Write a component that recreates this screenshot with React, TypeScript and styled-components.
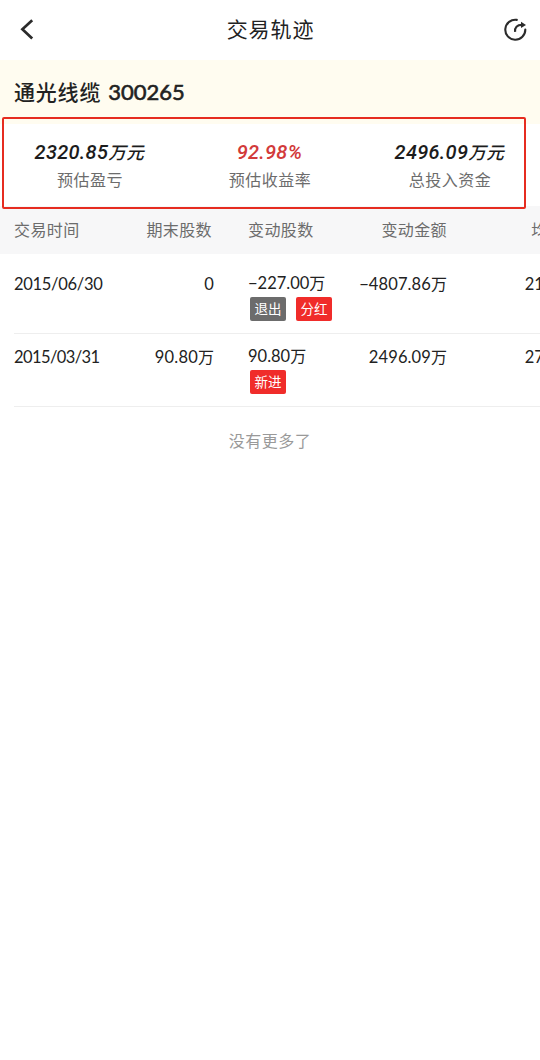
import React from 'react';
import styled, { createGlobalStyle } from 'styled-components';

const GlobalStyle = createGlobalStyle`
  * { box-sizing: border-box; }
  body {
    margin: 0;
    background: #fff;
    color: #222;
    font-family: Lato, "Noto Sans CJK SC", sans-serif;
    overflow-x: hidden;
  }
`;

const Page = styled.main`
  position: relative;
  width: 540px;
  min-height: 1060px;
  background: #fff;
  overflow: hidden;
`;

const Header = styled.header`
  display: flex;
  align-items: center;
  justify-content: space-between;
  height: 60px;
  padding: 0 12px 0 16px;
`;

const Title = styled.h1`
  margin: 0;
  padding-right: 3px;
  padding-bottom: 2px;
  font-size: 21px;
  line-height: 56px;
  letter-spacing: 0.9px;
  font-weight: 400;
`;

const IconButton = styled.button`
  display: flex;
  width: 24px;
  height: 24px;
  padding: 0;
  border: 0;
  background: none;
`;

const StockBar = styled.section`
  height: 64px;
  padding-left: 14px;
  background: #fffcf0;
  font-size: 21px;
  font-weight: 500;
  line-height: 64px;
  letter-spacing: 0.8px;
  white-space: pre;
`;

const StockCode = styled.span`
  margin-left: 7px;
  font-family: Lato, sans-serif;
  font-size: 22px;
  font-weight: 400;
  letter-spacing: 0;
  -webkit-text-stroke: 0.6px #222;
`;

const Stats = styled.section`
  display: grid;
  grid-template-columns: repeat(3, 180px);
  height: 82px;
  padding-top: 16px;
  text-align: center;
`;

const StatValue = styled.div<{ $red?: boolean }>`
  height: 26px;
  padding-right: 1px;
  line-height: 25px;
  font-family: Roboto, "Noto Sans CJK SC", sans-serif;
  font-size: 20px;
  font-style: italic;
  font-weight: 500;
  letter-spacing: 0.3px;
  color: ${(p) => (p.$red ? '#d23a3a' : '#1c1c1c')};
`;

const StatUnit = styled.span`
  font-size: 17.5px;
  letter-spacing: 0.6px;
`;

const StatLabel = styled.div`
  height: 28px;
  line-height: 28px;
  font-size: 16px;
  letter-spacing: 0.5px;
  color: #6c6c6c;
`;

const Highlight = styled.div`
  position: absolute;
  left: 2px;
  top: 117px;
  width: 524px;
  height: 92px;
  border: 2px solid #e62c20;
  border-radius: 2px;
`;

const columns = '100px 100px 34px 99px 100px 119px';

const TableHead = styled.div`
  display: grid;
  grid-template-columns: ${columns};
  height: 48px;
  padding-left: 14px;
  background: #f7f7f8;
  color: #6c6c6c;
  font-size: 16px;
  line-height: 48px;
  letter-spacing: 0.4px;
`;

const HeadCell = styled.div<{ $right?: boolean; $col: number; $inset?: number }>`
  grid-column: ${(p) => p.$col};
  padding-right: ${(p) => p.$inset || 0}px;
  text-align: ${(p) => (p.$right ? 'right' : 'left')};
  white-space: nowrap;
`;

const Row = styled.div<{ $height: number; $top: number }>`
  display: grid;
  grid-template-columns: ${columns};
  width: 552px;
  height: ${(p) => p.$height}px;
  margin-left: 14px;
  padding-top: ${(p) => p.$top}px;
  border-bottom: 1px solid #eee;
`;

const Cell = styled.div<{ $right?: boolean; $col: number }>`
  grid-column: ${(p) => p.$col};
  font-size: 16px;
  line-height: 24px;
  text-align: ${(p) => (p.$right ? 'right' : 'left')};
  white-space: nowrap;
`;

const Num = styled.span<{ $gap?: number }>`
  font-size: 16.5px;
  letter-spacing: ${(p) => p.$gap || 0}px;
`;

const Change = styled.div`
  margin-top: -1px;
`;

const Tags = styled.div`
  display: flex;
  gap: 10px;
  margin: 2px 0 0 2px;
`;

const Tag = styled.span<{ $grey?: boolean }>`
  width: 36px;
  height: 24px;
  border-radius: 2px;
  background: ${(p) => (p.$grey ? '#6c6c6c' : '#f02c2a')};
  color: #fff;
  font-size: 13.5px;
  line-height: 24px;
  text-align: center;
`;

const Footer = styled.footer`
  padding-top: 20px;
  text-align: center;
  color: #999;
  font-size: 16px;
  line-height: 28px;
  letter-spacing: 0.5px;
`;

const stats = [
  { value: '2320.85', unit: '万元', label: '预估盈亏' },
  { value: '92.98%', unit: '', label: '预估收益率', red: true },
  { value: '2496.09', unit: '万元', label: '总投入资金' },
];

const trades = [
  {
    date: '2015/06/30', gap: -0.3, held: '0', heldUnit: '', change: '−227.00', amount: '−4807.86', price: '21.18',
    tags: [{ text: '退出', grey: true }, { text: '分红', grey: false }], height: 80, top: 18,
  },
  {
    date: '2015/03/31', gap: -0.6, held: '90.80', heldUnit: '万', change: '90.80', amount: '2496.09', price: '27.49',
    tags: [{ text: '新进', grey: false }], height: 73, top: 11,
  },
];

export default function App() {
  return (
    <Page>
      <GlobalStyle />
      <Header>
        <IconButton aria-label="返回">
          <svg width="24" height="24" viewBox="0 0 24 24" fill="none" stroke="#2b2b2b" strokeWidth="2.7">
            <path d="M16.2 2.2 6.4 11.3 16.2 20.6" />
          </svg>
        </IconButton>
        <Title>交易轨迹</Title>
        <IconButton aria-label="分享">
          <svg width="24" height="24" viewBox="0 0 24 24" fill="none" stroke="#2b2b2b" strokeWidth="2.1">
            <path d="M12.8 1.9A10 10 0 1 0 21.3 11.5" strokeLinecap="round" />
            <path d="M11.1 13.8C10.6 9.3 13 6.9 18 6.9" />
            <path d="M17 3.8 22 6.9 17 10Z" fill="#2b2b2b" stroke="none" />
          </svg>
        </IconButton>
      </Header>
      <StockBar>通光线缆<StockCode>300265</StockCode></StockBar>
      <Stats>
        {stats.map((s) => (
          <div key={s.label}>
            <StatValue $red={s.red}>{s.value}<StatUnit>{s.unit}</StatUnit></StatValue>
            <StatLabel>{s.label}</StatLabel>
          </div>
        ))}
      </Stats>
      <Highlight />
      <TableHead>
        <HeadCell $col={1}>交易时间</HeadCell>
        <HeadCell $col={2} $right $inset={2}>期末股数</HeadCell>
        <HeadCell $col={4}>变动股数</HeadCell>
        <HeadCell $col={5} $right>变动金额</HeadCell>
        <HeadCell $col={6} $right $inset={2}>均价</HeadCell>
      </TableHead>
      {trades.map((t) => (
        <Row key={t.date} $height={t.height} $top={t.top}>
          <Cell $col={1}><Num $gap={t.gap}>{t.date}</Num></Cell>
          <Cell $col={2} $right><Num $gap={0.2}>{t.held}</Num>{t.heldUnit}</Cell>
          <Cell $col={4}>
            <Change><Num>{t.change}</Num>万</Change>
            <Tags>
              {t.tags.map((tag) => <Tag key={tag.text} $grey={tag.grey}>{tag.text}</Tag>)}
            </Tags>
          </Cell>
          <Cell $col={5} $right><Num $gap={0.12}>{t.amount}</Num>万</Cell>
          <Cell $col={6} $right><Num $gap={-0.2}>{t.price}</Num></Cell>
        </Row>
      ))}
      <Footer>没有更多了</Footer>
    </Page>
  );
}
